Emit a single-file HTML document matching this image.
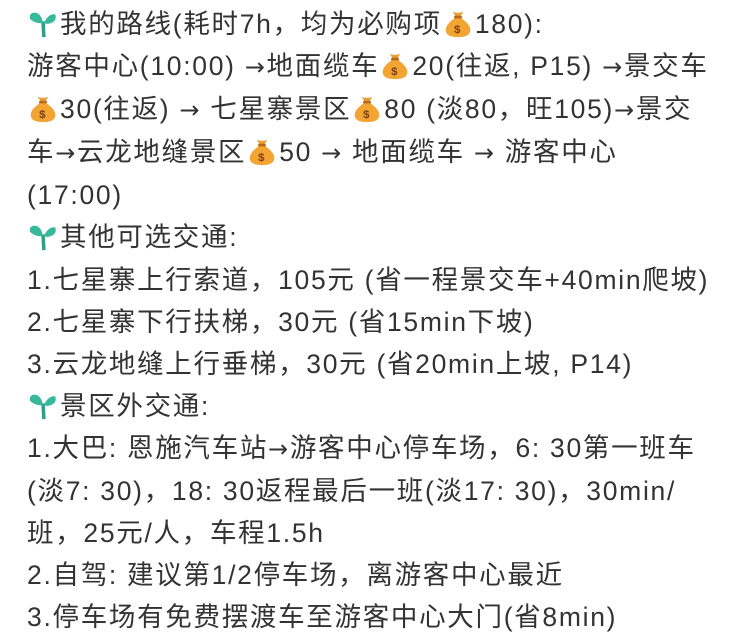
<!DOCTYPE html>
<html><head><meta charset="utf-8"><style>
html,body{margin:0;padding:0;background:#fff;width:734px;height:639px;overflow:hidden}
.w{position:absolute;left:27px;top:3px;font-family:"Liberation Sans","Noto Sans CJK SC",sans-serif;font-size:26.5px;line-height:42.1px;color:#333;white-space:nowrap;letter-spacing:1.7px}
.e{display:inline-block;width:28px;height:28px;vertical-align:-5px;margin:0 3px 0 2px}
.a{font-family:"DejaVu Sans",sans-serif;font-size:24px}
</style></head><body>
<svg width="0" height="0" style="position:absolute">
<defs>
<symbol id="bag" viewBox="0 0 32 32">
<path d="M10 2 L13 7 L19 7 L22 2 Q16 4.5 10 2Z" fill="#e8a033"/>
<rect x="11.5" y="6.5" width="9" height="3.5" rx="1.5" fill="#b86b17"/>
<path d="M12 9.5 Q1 17 2 24 Q3 31 16 31 Q29 31 30 24 Q31 17 20 9.5Z" fill="#f2a533"/>
<text x="16" y="26" font-family="Liberation Sans" font-weight="bold" font-size="13" text-anchor="middle" fill="#7a3e0a">$</text>
</symbol>
<symbol id="sp" viewBox="0 0 32 32">
<path d="M14 13 L15 31 L19 31 L18 13Z" fill="#2f9e88"/>
<path d="M16 15 Q7 16 1 10 Q0 3 7 3 Q14 4 16 15Z" fill="#37b89b"/>
<path d="M17 15 Q22 4 30 5 Q32 11 27 14 Q22 17 17 15Z" fill="#37b89b"/>
</symbol>
</defs></svg>
<div class="w">
<svg class="e"><use href="#sp"/></svg>我的路线(耗时7h，均为必购项<svg class="e"><use href="#bag"/></svg>180):<br>
游客中心(10:00) <span class="a">→</span>地面缆车<svg class="e"><use href="#bag"/></svg>20(往返, P15) <span class="a">→</span>景交车<br>
<svg class="e"><use href="#bag"/></svg>30(往返) <span class="a">→</span> 七星寨景区<svg class="e"><use href="#bag"/></svg>80 (淡80，旺105)<span class="a">→</span>景交<br>
车<span class="a">→</span>云龙地缝景区<svg class="e"><use href="#bag"/></svg>50 <span class="a">→</span> 地面缆车 <span class="a">→</span> 游客中心<br>
(17:00)<br>
<svg class="e"><use href="#sp"/></svg>其他可选交通:<br>
1.七星寨上行索道，105元 (省一程景交车+40min爬坡)<br>
2.七星寨下行扶梯，30元 (省15min下坡)<br>
3.云龙地缝上行垂梯，30元 (省20min上坡, P14)<br>
<svg class="e"><use href="#sp"/></svg>景区外交通:<br>
1.大巴: 恩施汽车站<span class="a">→</span>游客中心停车场，6: 30第一班车<br>
(淡7: 30)，18: 30返程最后一班(淡17: 30)，30min/<br>
班，25元/人，车程1.5h<br>
2.自驾: 建议第1/2停车场，离游客中心最近<br>
3.停车场有免费摆渡车至游客中心大门(省8min)
</div>
</body></html>
